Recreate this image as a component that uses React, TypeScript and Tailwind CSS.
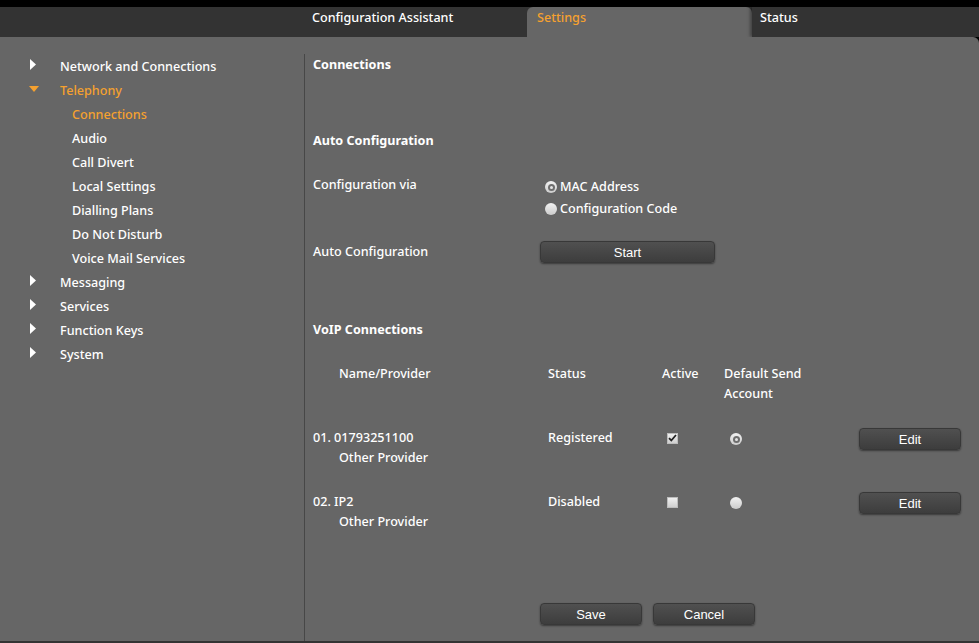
import React from "react";

const font = { fontFamily: '"Noto Sans", "DejaVu Sans", sans-serif' };

function Tri({ open, orange }: { open?: boolean; orange?: boolean }) {
  if (open)
    return (
      <svg width="10" height="6" viewBox="0 0 10 6" className="block">
        <path d="M0 0 L10 0 L5 6 Z" fill={orange ? "#f5a12f" : "#fff"} />
      </svg>
    );
  return (
    <svg width="6" height="11" viewBox="0 0 6 11" className="block">
      <path d="M0 0 L6 5.5 L0 11 Z" fill="#fff" />
    </svg>
  );
}

function Btn({ label, w }: { label: string; w: string }) {
  return (
    <button
      className={`${w} h-[22px] rounded-[4px] bg-gradient-to-b from-[#505050] to-[#3d3d3d] border border-[#383838] shadow-[0_1px_2px_rgba(0,0,0,0.45)] text-white text-[13px] leading-none flex items-center justify-center`}
      style={{ fontFamily: '"Liberation Sans", Arial, sans-serif' }}
    >
      {label}
    </button>
  );
}

function Radio({ checked }: { checked?: boolean }) {
  return (
    <span className="w-[12px] h-[12px] rounded-full bg-gradient-to-b from-[#f2f2f2] to-[#cccccc] flex items-center justify-center shrink-0">
      {checked && <span className="w-[7px] h-[7px] rounded-full bg-[#6e6e6e] flex items-center justify-center"><span className="w-[3px] h-[3px] rounded-full bg-[#e4e4e4]" /></span>}
    </span>
  );
}

function Check({ checked }: { checked?: boolean }) {
  return (
    <span className="w-[11px] h-[11px] bg-gradient-to-b from-[#f0f0f0] to-[#d0d0d0] border border-[#bdbdbd] flex items-center justify-center">
      {checked && (
        <svg width="9" height="8" viewBox="0 0 9 8">
          <path d="M1 4.2 L3.3 6.5 L8 1" stroke="#222" strokeWidth="1.8" fill="none" />
        </svg>
      )}
    </span>
  );
}

export default function App() {
  const nav: { t: string; lvl: number; open?: boolean; active?: boolean; arrow?: boolean }[] = [
    { t: "Network and Connections", lvl: 0, arrow: true },
    { t: "Telephony", lvl: 0, open: true, active: true, arrow: true },
    { t: "Connections", lvl: 1, active: true },
    { t: "Audio", lvl: 1 },
    { t: "Call Divert", lvl: 1 },
    { t: "Local Settings", lvl: 1 },
    { t: "Dialling Plans", lvl: 1 },
    { t: "Do Not Disturb", lvl: 1 },
    { t: "Voice Mail Services", lvl: 1 },
    { t: "Messaging", lvl: 0, arrow: true },
    { t: "Services", lvl: 0, arrow: true },
    { t: "Function Keys", lvl: 0, arrow: true },
    { t: "System", lvl: 0, arrow: true },
  ];

  return (
    <div className="w-[979px] h-[643px] bg-black flex flex-col text-[12.6px] font-medium text-white overflow-hidden" style={font}>
      <div className="h-[7px] bg-black" />
      {/* tab bar */}
      <div className="h-[30px] bg-[#333333] flex items-stretch">
        <div className="w-[302px]" />
        <div className="w-[225px] pl-[10px] pt-[2px] leading-[18px]">Configuration Assistant</div>
        <div className="w-[225px] pl-[10px] pt-[2px] leading-[18px] bg-[#666666] rounded-t-[6px] text-[#f5a12f]">Settings</div>
        <div className="w-[227px] pl-[8px] pt-[2px] leading-[18px] bg-[#333333] shadow-[-2px_0_3px_rgba(0,0,0,0.35)]">Status</div>
      </div>
      {/* main */}
      <div className="flex-1 bg-[#666666] rounded-tr-[6px] flex pt-[18px] min-h-0">
        <div className="w-[305px] border-r border-[#474747] -mt-[1px] pt-[1px] flex flex-col">
          {nav.map((n, i) => (
            <div key={i} className="h-[24px] flex items-center">
              <div className="w-[60px] pl-[30px] flex items-center">
                {n.arrow && (n.open ? <div className="-ml-[1px] -mt-[4px]"><Tri open orange /></div> : <div className="-mt-[5px]"><Tri /></div>)}
              </div>
              <span className={`${n.lvl === 1 ? "ml-[12px]" : ""} ${n.active ? "text-[#f5a12f]" : "text-white"}`}>{n.t}</span>
            </div>
          ))}
        </div>
        <div className="flex-1 pl-[8px] flex flex-col">
          <div className="h-[20px] flex items-center font-bold">Connections</div>
          <div className="mt-[56px] h-[20px] flex items-center font-bold">Auto Configuration</div>
          <div className="mt-[24px] flex">
            <div className="w-[227px] h-[20px] flex items-center">Configuration via</div>
            <div className="flex flex-col pl-[5px] pt-[1px]">
              <div className="h-[22px] flex items-center gap-[3px]"><Radio checked /><span>MAC Address</span></div>
              <div className="h-[22px] flex items-center gap-[3px]"><Radio /><span>Configuration Code</span></div>
            </div>
          </div>
          <div className="mt-[21px] flex items-center">
            <div className="w-[227px] h-[22px] flex items-center">Auto Configuration</div>
            <Btn label="Start" w="w-[175px]" />
          </div>
          <div className="mt-[57px] h-[20px] flex items-center font-bold">VoIP Connections</div>
          <div className="mt-[24px] grid grid-cols-[235px_114px_62px_135px_102px]">
            <div className="pl-[26px] leading-[20px]">Name/Provider</div>
            <div className="leading-[20px]">Status</div>
            <div className="leading-[20px]">Active</div>
            <div className="leading-[20px] col-span-2">Default Send<br />Account</div>

            <div className="mt-[24px] leading-[20px]">01. 01793251100<br /><span className="pl-[26px]">Other Provider</span></div>
            <div className="mt-[24px] leading-[20px]">Registered</div>
            <div className="mt-[24px] h-[20px] pl-[5px] flex items-center"><Check checked /></div>
            <div className="mt-[24px] h-[20px] pl-[6px] flex items-center pt-[2px]"><Radio checked /></div>
            <div className="mt-[24px]"><Btn label="Edit" w="w-[102px]" /></div>

            <div className="mt-[24px] leading-[20px]">02. IP2<br /><span className="pl-[26px]">Other Provider</span></div>
            <div className="mt-[24px] leading-[20px]">Disabled</div>
            <div className="mt-[24px] h-[20px] pl-[5px] flex items-center"><Check /></div>
            <div className="mt-[24px] h-[20px] pl-[6px] flex items-center pt-[2px]"><Radio /></div>
            <div className="mt-[24px]"><Btn label="Edit" w="w-[102px]" /></div>
          </div>
          <div className="mt-[71px] pl-[227px] flex gap-[11px]">
            <Btn label="Save" w="w-[102px]" />
            <Btn label="Cancel" w="w-[102px]" />
          </div>
        </div>
      </div>
      <div className="h-[2px] bg-[#333333]" />
    </div>
  );
}
